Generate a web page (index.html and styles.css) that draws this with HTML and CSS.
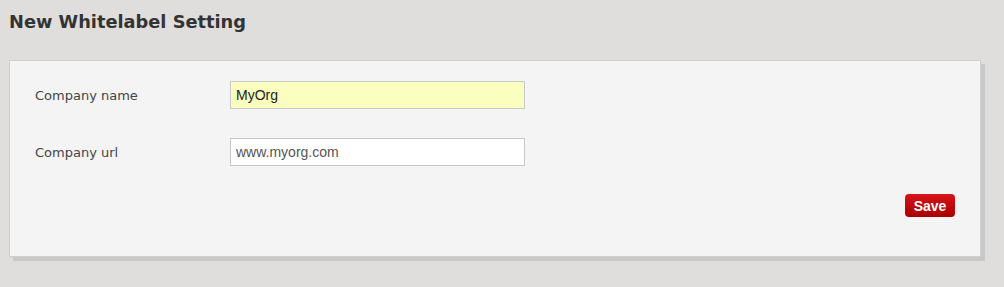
FILE: index.html
```html
<!DOCTYPE html>
<html lang="en">
<head>
    <meta charset="UTF-8">
    <title>New Whitelabel Setting</title>
    <link rel="stylesheet" href="styles.css">
</head>
<body>
    <h2 class="page-title">New Whitelabel Setting</h2>

    <form class="panel">
        <div class="form-row">
            <label for="company-name">Company name</label>
            <input type="text" id="company-name" class="highlight" value="MyOrg">
        </div>
        <div class="form-row">
            <label for="company-url">Company url</label>
            <input type="text" id="company-url" value="www.myorg.com">
        </div>
        <div class="form-actions">
            <button type="button" class="btn-save">Save</button>
        </div>
    </form>
</body>
</html>
```

FILE: styles.css
```css
* {
    margin: 0;
    padding: 0;
    box-sizing: border-box;
}

html {
    background-color: #dfdedc;
}

body {
    min-height: 287px;
    padding: 9px 23px 26px 9px;
    font-family: "DejaVu Sans", Verdana, sans-serif;
}

.page-title {
    font-size: 17.8px;
    font-weight: bold;
    color: #333;
    line-height: 26px;
    margin-bottom: 25px;
}

.panel {
    background: #f4f4f4;
    border: 1px solid #cfcfcf;
    box-shadow: 4px 4px 0 #c9c9c9;
    padding: 20px 25px 38px 25px;
    height: 197px;
}

.form-row {
    display: flex;
    align-items: center;
    margin-bottom: 29px;
}

.form-row label {
    width: 195px;
    font-size: 13px;
    color: #444;
}

.form-row input {
    width: 295px;
    height: 28px;
    border: 1px solid #c8c8c8;
    background: #fff;
    padding: 0 5px;
    font-family: "Liberation Sans", Arial, sans-serif;
    font-size: 14px;
    color: #555;
}

.form-row input.highlight {
    background: #fafebe;
    color: #222;
}

.form-actions {
    display: flex;
    justify-content: flex-end;
    margin-top: -1px;
}

.btn-save {
    width: 50px;
    height: 23px;
    border: none;
    border-radius: 4px;
    background: linear-gradient(to bottom, #d8141a 0%, #a80000 100%);
    color: #fff;
    font-family: "Liberation Sans", Arial, sans-serif;
    font-size: 14px;
    font-weight: bold;
}
```
